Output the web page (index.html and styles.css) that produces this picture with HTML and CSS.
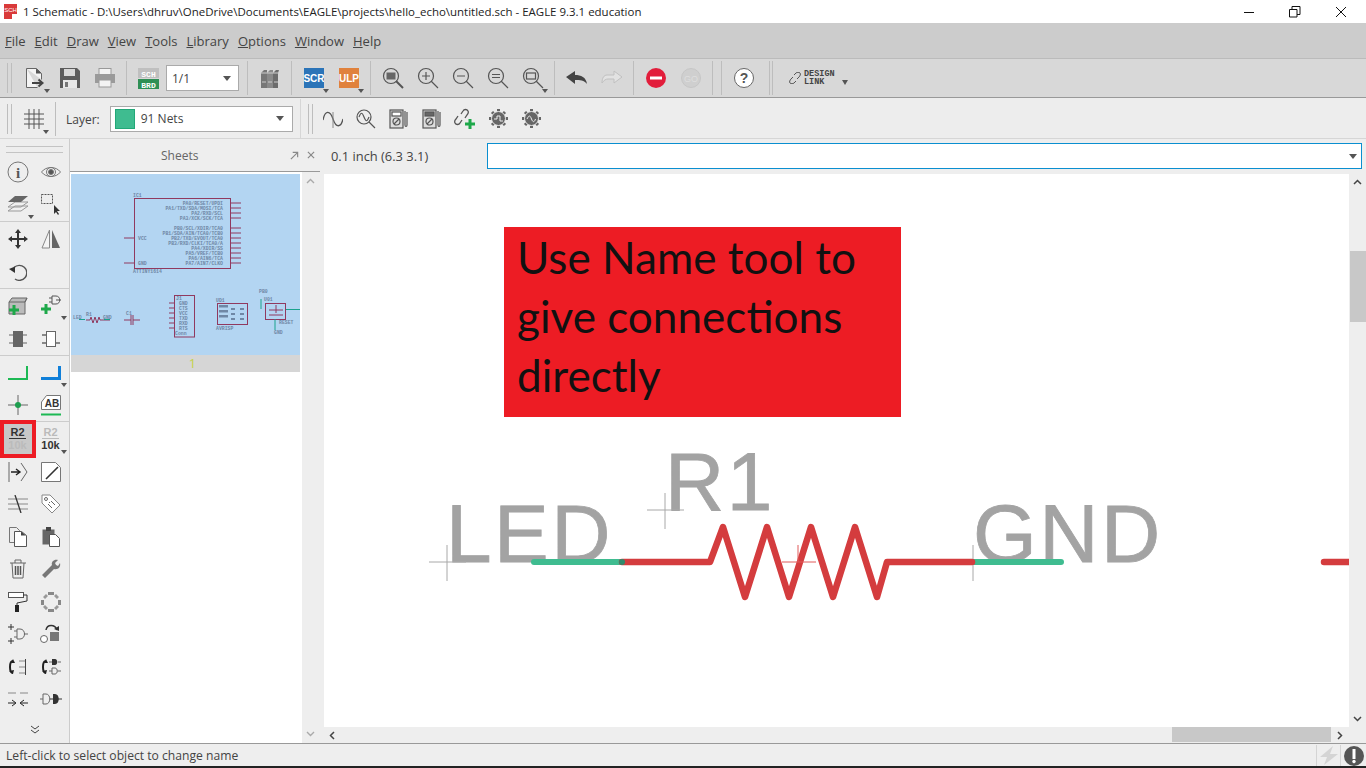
FILE: index.html
```html
<!DOCTYPE html>
<html lang="en">
<head>
  <meta charset="UTF-8">
  <title>1 Schematic - EAGLE 9.3.1 education</title>
  <link rel="stylesheet" href="styles.css">
</head>
<body>
<div class="app">

  <!-- title bar -->
  <div class="titlebar">
    <svg class="app-icon" width="16" height="16" viewBox="0 0 16 16"><rect x="1" y="0" width="13" height="15" fill="#d93a3a"/><rect x="9" y="10" width="6" height="6" fill="#fff"/><text x="7.5" y="8" class="t-sch">SCH</text></svg>
    <span class="title-text">1 Schematic - D:\Users\dhruv\OneDrive\Documents\EAGLE\projects\hello_echo\untitled.sch - EAGLE 9.3.1 education</span>
    <div class="winbtns">
      <div class="winbtn"><svg width="12" height="12" viewBox="0 0 12 12"><path d="M1 6.5h10" stroke="#111" fill="none"/></svg></div>
      <div class="winbtn"><svg width="12" height="12" viewBox="0 0 12 12"><path d="M.5 3.5h7.5v7.5h-7.5zM3 3V.5h8v8H8" stroke="#111" fill="none"/></svg></div>
      <div class="winbtn"><svg width="12" height="12" viewBox="0 0 12 12"><path d="M1 1l10 10M11 1L1 11" stroke="#111" fill="none"/></svg></div>
    </div>
  </div>

  <!-- menu -->
  <div class="menubar">
    <span><u>F</u>ile</span><span><u>E</u>dit</span><span><u>D</u>raw</span><span><u>V</u>iew</span><span><u>T</u>ools</span><span><u>L</u>ibrary</span><span><u>O</u>ptions</span><span><u>W</u>indow</span><span><u>H</u>elp</span>
  </div>

  <!-- main toolbar -->
  <div class="toolbar tb-main">
    <div class="grip"></div>
    <div class="tb drop"><svg width="24" height="24" viewBox="0 0 24 24"><path d="M3.5 2.5h10l5 5v6M3.5 2.5v19h11" fill="#f4f4f4" stroke="#666"/><path d="M13 2.5l5.500 5h-5.500z" fill="#555"/><path d="M9 17h10M15.500 13.500l4 3.500-4 3.500" fill="none" stroke="#444" stroke-width="2"/></svg></div>
    <div class="tb"><svg width="22" height="22" viewBox="0 0 22 22"><path d="M1 1h17l3 3v17H1z" fill="#5c5c5c"/><rect x="5" y="2" width="11" height="7" fill="#d8d8d8"/><rect x="4" y="13" width="14" height="8" fill="#e8e8e8"/><rect x="6" y="15" width="3" height="5" fill="#777"/></svg></div>
    <div class="tb"><svg width="22" height="22" viewBox="0 0 22 22"><rect x="5" y="1.500" width="12" height="6" fill="#f3f3f3" stroke="#999"/><rect x="1" y="7" width="20" height="9" fill="#9a9a9a"/><rect x="5" y="13" width="12" height="7" fill="#f3f3f3" stroke="#999"/></svg></div>
    <div class="sep"></div>
    <div class="tb"><svg width="21" height="21" viewBox="0 0 21 21"><rect width="21" height="10" fill="#bfbfbf"/><rect y="11" width="21" height="10" fill="#2f8f55"/><text x="10.500" y="8.500" class="t-mini">SCH</text><text x="10.500" y="19.500" class="t-mini">BRD</text></svg></div>
    <div class="combo sheet-combo"><span>1/1</span><i class="arrow"></i></div>
    <div class="sep"></div>
    <div class="tb"><svg width="20" height="22" viewBox="0 0 20 22"><path d="M1 6l3-3h3v18H1z" fill="#777"/><path d="M7 6l3-3h3v18H7z" fill="#8a8a8a"/><path d="M13 6l3-3h3l-1 3v15h-5z" fill="#6c6c6c"/><path d="M1 6h18M2 15h4M8 15h4M14 15h4" stroke="#ccc" fill="none"/></svg></div>
    <div class="sep"></div>
    <div class="tb drop"><svg width="20" height="20" viewBox="0 0 20 20"><rect width="20" height="20" fill="#2b74b8"/><text x="10" y="14" class="t-badge">SCR</text></svg></div>
    <div class="tb drop"><svg width="20" height="20" viewBox="0 0 20 20"><rect width="20" height="20" fill="#e0823d"/><text x="10" y="14" class="t-badge">ULP</text></svg></div>
    <div class="sep"></div>
    <div class="tb"><svg class="ln" width="22" height="22" viewBox="0 0 22 22"><circle cx="9" cy="9" r="7.500"/><rect x="4.500" y="5.500" width="9" height="7" fill="#666" stroke="none"/><path d="M14 14l7 7" stroke-width="2"/></svg></div>
    <div class="tb"><svg class="ln" width="22" height="22" viewBox="0 0 22 22"><circle cx="9" cy="9" r="7.500"/><path d="M5 9h8M9 5v8M14 14l7 7"/></svg></div>
    <div class="tb"><svg class="ln" width="22" height="22" viewBox="0 0 22 22"><circle cx="9" cy="9" r="7.500"/><path d="M5 9h8M14 14l7 7"/></svg></div>
    <div class="tb"><svg class="ln" width="22" height="22" viewBox="0 0 22 22"><circle cx="9" cy="9" r="7.500"/><path d="M5 7.500h8M5 10.500h8M14 14l7 7"/></svg></div>
    <div class="tb drop"><svg class="ln" width="22" height="22" viewBox="0 0 22 22"><circle cx="9" cy="9" r="7.500"/><rect x="4.500" y="6" width="9" height="6"/><path d="M14 14l7 7"/></svg></div>
    <div class="sep"></div>
    <div class="tb"><svg width="22" height="16" viewBox="0 0 22 16"><path d="M0 7l9-6v4c6 0 11 2 12 9-3-4-7-4-12-4v4z" fill="#444"/></svg></div>
    <div class="tb"><svg width="22" height="16" viewBox="0 0 22 16"><path d="M21 7l-8-6v4H6c-3 0-5 3-5 8 2-3 4-4 6-4h6v4z" fill="#e2e2e2" stroke="#c0c0c0"/></svg></div>
    <div class="sep"></div>
    <div class="tb"><svg width="20" height="20" viewBox="0 0 20 20"><circle cx="10" cy="10" r="10" fill="#e21d3b"/><rect x="4" y="8.500" width="12" height="3" fill="#fff"/></svg></div>
    <div class="tb"><svg width="20" height="20" viewBox="0 0 20 20"><circle cx="10" cy="10" r="9.500" fill="#cfcfcf" stroke="#c6c6c6"/><text x="10" y="13.500" class="t-go">GO</text></svg></div>
    <div class="sep sep-last"></div>
    <div class="sep sep-pair"></div>
    <div class="tb"><svg width="20" height="20" viewBox="0 0 20 20"><circle cx="10" cy="10" r="9.500" fill="#fff" stroke="#666"/><text x="10" y="15" class="t-help">?</text></svg></div>
    <div class="sep sep-link"></div>
    <div class="sep sep-tight"></div>
    <div class="design-link">
      <svg width="12" height="12" viewBox="0 0 12 12"><path d="M5 3l2-2c1-1 3-1 4 0s0 3-1 4L8 7M7 9l-2 2c-1 1-3 1-4 0s0-3 1-4l2-2" fill="none" stroke="#555"/></svg>
      <span>DESIGN<br>LINK</span>
      <i class="arrow"></i>
    </div>
  </div>

  <!-- layer toolbar -->
  <div class="toolbar tb-second">
    <div class="grip"></div>
    <div class="tb drop tb-grid"><svg width="20" height="20" viewBox="0 0 20 20"><path d="M5 0v20M10 0v20M15 0v20M0 5h20M0 10h20M0 15h20" stroke="#555" fill="none"/></svg></div>
    <div class="sep"></div>
    <span class="layer-label">Layer:</span>
    <div class="combo layer-combo"><b class="swatch"></b><span>91 Nets</span><i class="arrow"></i></div>
    <div class="sep sep-light"></div>
    <div class="grip grip-mid"></div>
    <div class="tb tb-33"><svg width="20" height="20" viewBox="0 0 20 20"><path d="M0 11C2 1 7 1 10 10s8 9 10 0" fill="none" stroke="#555" stroke-width="1.300"/><path d="M10 3v16" stroke="#888"/></svg></div>
    <div class="tb tb-33"><svg class="ln" width="20" height="20" viewBox="0 0 20 20"><circle cx="8" cy="8" r="7"/><path d="M3 8c2-5 3-5 5 0s3 5 5 0M13 13l6 6"/></svg></div>
    <div class="tb tb-33"><svg class="ln" width="20" height="20" viewBox="0 0 20 20"><rect x="1" y="1" width="13" height="18" fill="#ddd"/><rect x="3" y="3" width="9" height="4" fill="#fff"/><circle cx="7.500" cy="12.500" r="3.500"/><path d="M5 15l5-5M16 2v14c0 2 2 2 2 0V3"/></svg></div>
    <div class="tb tb-33"><svg class="ln" width="20" height="20" viewBox="0 0 20 20"><rect x="1" y="1" width="13" height="18" fill="#ddd"/><rect x="3" y="3" width="9" height="4" fill="#666"/><circle cx="7.500" cy="12.500" r="3.500"/><path d="M5 15l5-5M16 2v14c0 2 2 2 2 0V3"/></svg></div>
    <div class="tb tb-33"><svg width="22" height="22" viewBox="0 0 22 22"><path d="M7 6l2-3c1-2 4-2 5 0s0 3-1 4l-2 3M8 12l-2 3c-1 2-4 2-5 0s0-3 1-4l2-3" fill="none" stroke="#555" stroke-width="1.300"/><path d="M16 11v10M11 16h10" stroke="#1ea84a" stroke-width="3"/></svg></div>
    <div class="tb tb-33"><svg width="21" height="21" viewBox="0 0 21 21"><path d="M10.500 1v19M1 10.500h19M4 4l13 13M17 4L4 17" stroke="#666" stroke-width="3" fill="none"/><circle cx="10.500" cy="10.500" r="7" fill="#666" stroke="#eee"/><path d="M6 11h3V8h3v5h3" fill="none" stroke="#eee"/></svg></div>
    <div class="tb tb-33"><svg width="21" height="21" viewBox="0 0 21 21"><path d="M10.500 1v19M1 10.500h19M4 4l13 13M17 4L4 17" stroke="#666" stroke-width="3" fill="none"/><circle cx="10.500" cy="10.500" r="7" fill="#666" stroke="#eee"/><path d="M6 11c2-4 3-4 4.500 0s3 3 4 0" fill="none" stroke="#eee"/></svg></div>
  </div>

  <div class="main">

    <!-- left command column -->
    <div class="tools">
      <div class="tools-grip"></div>
      <div class="tool-group">
        <div class="tool"><svg class="ln ln-thin" width="22" height="22" viewBox="0 0 22 22"><circle cx="11" cy="11" r="10"/><text x="11" y="16.500" class="t-i">i</text></svg></div>
        <div class="tool"><svg class="ln ln-thin" width="20" height="14" viewBox="0 0 20 14"><path d="M.5 7C5 1 15 1 19.500 7 15 13 5 13 .5 7z"/><circle cx="10" cy="7" r="2.500" fill="#555"/><circle cx="10" cy="7" r="4.500"/></svg></div>
        <div class="tool drop"><svg width="22" height="22" viewBox="0 0 22 22"><path d="M1 17l7-5h13l-7 5zM1 13l7-5h13l-7 5z" fill="#f0f0f0" stroke="#999"/><path d="M1 8l7-6h13l-7 6z" fill="#666"/></svg></div>
        <div class="tool"><svg width="20" height="22" viewBox="0 0 20 22"><rect x=".5" y=".5" width="11" height="9" fill="none" stroke="#555" stroke-dasharray="2 1"/><path d="M13 11v9l2-2 2 3 1-1-2-3h3z" fill="#333"/></svg></div>
      </div>
      <div class="tool-group">
        <div class="tool"><svg width="20" height="20" viewBox="0 0 20 20"><path d="M10 0l3 4h-2v5h5V7l4 3-4 3v-2h-5v5h2l-3 4-3-4h2v-5H4v2l-4-3 4-3v2h5V4H7z" fill="#333"/></svg></div>
        <div class="tool"><svg width="20" height="20" viewBox="0 0 20 20"><path d="M8.500 1v18H1z" fill="#f4f4f4" stroke="#888"/><path d="M11 1v18h8z" fill="#666"/></svg></div>
        <div class="tool"><svg width="18" height="18" viewBox="0 0 18 18"><path d="M5 4.500A7.500 7.500 0 1 1 6 16" fill="none" stroke="#555" stroke-width="1.400"/><path d="M0 6l6-2.500V10z" fill="#333"/></svg></div>
        <div class="tool"></div>
      </div>
      <div class="tool-group">
        <div class="tool"><svg width="20" height="20" viewBox="0 0 20 20"><path d="M1 6l3-4h15l-2 4v12H1z" fill="#bbb" stroke="#666"/><path d="M1 6h16l2-4" fill="none" stroke="#666"/><path d="M6 9v10M1 14h10" stroke="#1ea84a" stroke-width="3"/></svg></div>
        <div class="tool drop"><svg width="22" height="22" viewBox="0 0 22 22"><path d="M12 1h4c5 0 5 8 0 8h-4zM12 3H9M12 7H9M16 5h5" fill="none" stroke="#555"/><path d="M6 9v10M1 14h10" stroke="#1ea84a" stroke-width="3"/></svg></div>
        <div class="tool"><svg width="18" height="16" viewBox="0 0 18 16"><rect x="4" y="0" width="10" height="16" fill="#666"/><path d="M0 4h4M0 12h4M14 4h4M14 12h4" stroke="#aaa" stroke-width="2"/></svg></div>
        <div class="tool"><svg width="18" height="16" viewBox="0 0 18 16"><rect x="4.500" y=".5" width="9" height="15" fill="#fff" stroke="#666"/><path d="M0 4h4M0 12h4M14 12h4" stroke="#888" stroke-width="2"/></svg></div>
      </div>
      <div class="tool-group tool-group-tight">
        <div class="tool"><svg width="20" height="14" viewBox="0 0 20 14"><path d="M0 13h19V0" fill="none" stroke="#1db954" stroke-width="2"/></svg></div>
        <div class="tool drop"><svg width="20" height="14" viewBox="0 0 20 14"><path d="M0 12.500h18.500V0" fill="none" stroke="#0f7fd9" stroke-width="3"/></svg></div>
        <div class="tool"><svg width="20" height="20" viewBox="0 0 20 20"><path d="M0 10h20M10 0v20" stroke="#666" fill="none"/><circle cx="10" cy="10" r="3" fill="#1e9e4f"/></svg></div>
        <div class="tool"><svg width="20" height="22" viewBox="0 0 20 22"><path d="M.5 8l5-6.500h14v14H.5z" fill="#fff" stroke="#777"/><text x="11" y="13" class="t-ab">AB</text><path d="M0 20.500h20" stroke="#1db954" stroke-width="2"/></svg></div>
      </div>
      <div class="tool-rows">
        <div class="tool"><div class="r2-on"><span class="r2">R2</span><span class="r2v faded">10k</span></div></div>
        <div class="tool drop"><div class="r2-off"><span class="r2 faded">R2</span><span class="r2v">10k</span></div></div>
        <div class="tool"><svg width="20" height="20" viewBox="0 0 20 20"><path d="M1 0v20M13 1l6 9-6 9" fill="none" stroke="#666"/><path d="M3 10h8M8 7l4 3-4 3" fill="none" stroke="#222" stroke-width="1.400"/></svg></div>
        <div class="tool"><svg width="20" height="20" viewBox="0 0 20 20"><path d="M.5.5h14l5 5v14H.5z" fill="#fff" stroke="#777"/><path d="M5 17L17 5" stroke="#333" stroke-width="1.600"/></svg></div>
        <div class="tool"><svg width="20" height="18" viewBox="0 0 20 18"><path d="M0 4h20M0 9h20M0 14h20" stroke="#aaa" stroke-width="1.500"/><path d="M7 0l6 18" stroke="#333" stroke-width="1.300"/></svg></div>
        <div class="tool"><svg width="20" height="20" viewBox="0 0 20 20"><path d="M1 1h8l10 10-8 8L1 9z" fill="#fff" stroke="#888"/><circle cx="5" cy="5" r="1.500" fill="none" stroke="#666"/><path d="M8 8l1 1M10 7l4 4M7 10l4 4" stroke="#666"/></svg></div>
        <div class="tool"><svg width="18" height="20" viewBox="0 0 18 20"><path d="M.5.500h7l3 3v12H.5z" fill="#eee" stroke="#777"/><path d="M5.500 4.500h7l5 4v11h-12z" fill="#fff" stroke="#555"/><path d="M12 4.500l5 4h-5z" fill="#444"/></svg></div>
        <div class="tool"><svg width="18" height="20" viewBox="0 0 18 20"><rect x=".5" y="2.500" width="12" height="15" fill="#666"/><rect x="4" y="0" width="5" height="4" fill="#444"/><path d="M7.500 7.500h6l4 4v8h-10z" fill="#fff" stroke="#555"/></svg></div>
        <div class="tool"><svg width="16" height="20" viewBox="0 0 16 20"><path d="M0 4h16M5 4V1h6v3M2 4l1 15h10l1-15" fill="none" stroke="#666"/><path d="M5.500 7v9M8 7v9M10.500 7v9" stroke="#555" stroke-width="1.500"/></svg></div>
        <div class="tool"><svg width="20" height="20" viewBox="0 0 20 20"><path d="M1 16L11 6c-1-3 2-6 6-5l-3 3 1 2 2 1 2-3c1 4-2 7-6 6L4 19z" fill="#777"/></svg></div>
        <div class="tool"><svg width="20" height="20" viewBox="0 0 20 20"><rect x=".5" y=".5" width="15" height="5" fill="#fff" stroke="#555"/><path d="M15 3h4v6l-10 2v3" fill="none" stroke="#333"/><rect x="7" y="13" width="4" height="7" fill="#222"/></svg></div>
        <div class="tool"><svg width="20" height="20" viewBox="0 0 20 20"><rect x="7" y="0" width="6" height="3" fill="#888"/><rect x="7" y="17" width="6" height="3" fill="#888"/><rect x="0" y="8" width="3" height="5" fill="#888"/><rect x="17" y="8" width="3" height="5" fill="#888"/><path d="M2 5l3-3 2 2-3 3zM18 5l-3-3-2 2 3 3zM2 15l3 3 2-2-3-3zM18 15l-3 3-2-2 3-3z" fill="#999"/></svg></div>
        <div class="tool"><svg width="20" height="20" viewBox="0 0 20 20"><path d="M0 3h6M3 0v6M0 17h6M3 14v6" stroke="#333" fill="none"/><path d="M9 5h3c6 0 6 10 0 10H9zM9 7H6M9 13H6M16 10h4" fill="none" stroke="#666"/></svg></div>
        <div class="tool"><svg width="22" height="20" viewBox="0 0 22 20"><path d="M6 6c1-6 9-6 11 0" fill="none" stroke="#333" stroke-width="1.500"/><path d="M14 5l5 2 0-5z" fill="#333"/><circle cx="4" cy="15" r="3.500" fill="#fff" stroke="#666"/><rect x="10" y="8" width="9" height="9" fill="#777"/></svg></div>
        <div class="tool"><svg width="20" height="18" viewBox="0 0 20 18"><path d="M5 3C1 3 1 15 5 15" fill="none" stroke="#222" stroke-width="2"/><path d="M1 13l4 3 1-4zM5 1l-2 4 4 0z" fill="#222"/><path d="M11 3h6M11 9h6M11 15h6" stroke="#888"/><path d="M17.500 1v16" stroke="#444"/></svg></div>
        <div class="tool"><svg width="20" height="18" viewBox="0 0 20 18"><path d="M5 3C1 3 1 15 5 15" fill="none" stroke="#222" stroke-width="2"/><path d="M1 13l4 3 1-4zM5 1l-2 4 4 0z" fill="#222"/><path d="M11 1h3c3 0 3 6 0 6h-3z" fill="#333"/><path d="M11 10h3c3 0 3 6 0 6h-3z" fill="none" stroke="#666"/><path d="M8 4h3M17 4h3M8 13h3M17 13h3" stroke="#666"/></svg></div>
        <div class="tool"><svg width="20" height="16" viewBox="0 0 20 16"><path d="M0 2h8M12 2h8" stroke="#aaa" stroke-width="1.500"/><path d="M0 12h7M4 9l4 3-4 3M20 12h-7M16 9l-4 3 4 3" stroke="#222" fill="none"/></svg></div>
        <div class="tool"><svg width="22" height="12" viewBox="0 0 22 12"><path d="M3 1h3c5 0 5 10 0 10H3zM0 6h3" fill="none" stroke="#666"/><path d="M13 1h2c5 0 5 10 0 10h-2z" fill="#333"/><path d="M10 6h3M18 6h4" stroke="#333"/></svg></div>
      </div>
      <div class="tools-more"><svg width="10" height="9" viewBox="0 0 10 9"><path d="M1 1l4 3 4-3M1 5l4 3 4-3" fill="none" stroke="#444"/></svg></div>
    </div>

    <!-- sheets panel -->
    <div class="sheets">
      <div class="sheets-head">
        <span>Sheets</span>
        <svg class="head-ic" width="9" height="9" viewBox="0 0 10 10"><path d="M1 9l7-7M3 1.500h5.500V7" fill="none" stroke="#888" stroke-width="1.300"/></svg>
        <svg class="head-ic" width="8" height="8" viewBox="0 0 9 9"><path d="M1 1l7 7M8 1L1 8" stroke="#888" stroke-width="1.300"/></svg>
      </div>
      <div class="sheets-body">
        <div class="sheet-list">
          <div class="sheet-thumb">
            <svg width="229" height="181" viewBox="72 175 229 181">
              <g class="th-lines">
                <rect x="135.500" y="199.500" width="96" height="70"/>
                <path d="M232 204h10M232 209h10M232 214h10M232 219h10M232 229h10M232 234h10M232 239h10M232 244h10M232 249h10M232 254h10M232 259h10M232 264h10M125 239h10M125 264h10"/>
                <path d="M111 321h-10l-1-3-2 6-2-6-2 6-2-6-1 3h-4M125 321h7M134 321h7M132 316v10M134 316v10"/>
                <rect x="175.500" y="296.500" width="20" height="41.500"/>
                <path d="M170 304h5M170 309h5M170 314h5M170 319h5M170 324h5M170 329h5"/>
                <rect x="218.500" y="304.500" width="30" height="21"/>
                <rect x="266.500" y="304.500" width="20" height="16"/>
                <path d="M270 311h14M270 316h14M277 306v8"/>
              </g>
              <path class="th-nets" d="M80 320.500h6M105 320.500h6M262 300v10M287 310.500h14M276 320v11"/>
              <g class="th-blocks"><rect x="220" y="306" width="9" height="2.500"/><rect x="220" y="311" width="9" height="2.500"/><rect x="220" y="316" width="9" height="2.500"/><rect x="232" y="309" width="4" height="2"/><rect x="241" y="309" width="4" height="2"/><rect x="232" y="314" width="4" height="2"/><rect x="241" y="314" width="4" height="2"/><rect x="232" y="319" width="4" height="2"/><rect x="241" y="319" width="4" height="2"/></g>
              <g class="th-text">
                <text x="224" y="206" class="end">PA0/RESET/UPDI</text>
                <text x="224" y="211" class="end">PA1/TXD/SDA/MOSI/TCA</text>
                <text x="224" y="216" class="end">PA2/RXD/SCL</text>
                <text x="224" y="221" class="end">PA3/XCK/SCK/TCA</text>
                <text x="224" y="231" class="end">PB0/SCL/XDIR/TCA0</text>
                <text x="224" y="236" class="end">PB1/SDA/AIN/TCA0/TCB0</text>
                <text x="224" y="241" class="end">PB2/TXD/EVOUT/TCA0</text>
                <text x="224" y="246" class="end">PB3/RXD/CLKI/TCA0/A</text>
                <text x="224" y="251" class="end">PA4/XDIR/SS</text>
                <text x="224" y="256" class="end">PA5/VREF/TCB0</text>
                <text x="224" y="261" class="end">PA6/AIN6/TCA</text>
                <text x="224" y="266" class="end">PA7/AIN7/CLKO</text>
                <text x="139" y="241">VCC</text><text x="139" y="266">GND</text>
                <text x="134" y="198">IC1</text><text x="134" y="274">ATTINY1614</text>
                <text x="74" y="320">LED</text><text x="104" y="320">GND</text><text x="87" y="317">R1</text><text x="127" y="316">C1</text>
                <text x="177" y="301">J1</text><text x="180" y="306">GND</text><text x="180" y="311">CTS</text><text x="180" y="316">VCC</text><text x="180" y="321">TXD</text><text x="180" y="326">RXD</text><text x="180" y="331">RTS</text><text x="176" y="336">Conn</text>
                <text x="217" y="303">UD1</text><text x="217" y="331">AVRISP</text>
                <text x="260" y="294">PB0</text><text x="265" y="302">U01</text><text x="280" y="325">RESET</text><text x="275" y="335">GND</text>
              </g>
            </svg>
          </div>
          <div class="sheet-num">1</div>
        </div>
        <div class="vscroll vscroll-sheets">
          <svg width="9" height="6" viewBox="0 0 9 6"><path d="M1 5l3.500-3.500L8 5" fill="none" stroke="#aaa" stroke-width="1.400"/></svg>
          <svg width="9" height="6" viewBox="0 0 9 6"><path d="M1 1l3.500 3.500L8 1" fill="none" stroke="#aaa" stroke-width="1.400"/></svg>
        </div>
      </div>
    </div>

    <!-- command line + drawing -->
    <div class="work">
      <div class="cmdbar">
        <span class="coords">0.1 inch (6.3 3.1)</span>
        <div class="cmd-input"><i class="arrow"></i></div>
      </div>
      <div class="canvas-row">
        <div class="canvas">
          <svg class="sch" width="1025" height="553" viewBox="324 174 1025 553">
            <g class="vec-text">
              <text x="446" y="562">LED</text>
              <text x="665" y="510">R1</text>
              <text x="973" y="562">GND</text>
            </g>
            <path class="cross" d="M429 562h37M447 545v36M647 510h37M665 493v36M973 545v36"/>
            <path class="wire-net" d="M534 562h88M973 562h88"/>
            <path class="wire-part" d="M622 562h88l13-35 22 70 22-70 22 70 22-70 22 70 22-70 22 70 10-35h85M1324 562h25"/>
            <path class="cross-red" d="M782 562h34M798 545v17"/>
            <circle class="joint" cx="622" cy="562" r="3"/>
          </svg>
          <div class="note">Use Name tool to give connections directly</div>
        </div>
        <div class="vscroll vscroll-main">
          <svg width="9" height="6" viewBox="0 0 9 6"><path d="M1 5l3.500-3.500L8 5" fill="none" stroke="#444" stroke-width="1.500"/></svg>
          <div class="vthumb"></div>
          <svg width="9" height="6" viewBox="0 0 9 6"><path d="M1 1l3.500 3.500L8 1" fill="none" stroke="#444" stroke-width="1.500"/></svg>
        </div>
      </div>
      <div class="hscroll">
        <svg width="6" height="9" viewBox="0 0 6 9"><path d="M5 1L1.500 4.500 5 8" fill="none" stroke="#444" stroke-width="1.500"/></svg>
        <div class="hthumb"></div>
        <svg width="6" height="9" viewBox="0 0 6 9"><path d="M1 1l3.500 3.500L1 8" fill="none" stroke="#444" stroke-width="1.500"/></svg>
      </div>
    </div>
  </div>

  <!-- status -->
  <div class="status">
    <span>Left-click to select object to change name</span>
    <div class="status-right">
      <div class="status-cell"><svg width="20" height="20" viewBox="0 0 20 20"><path d="M14 0L1 11h7l-3 8 14-11h-8z" fill="#d4d4d4"/></svg></div>
      <div class="status-alert"><svg width="20" height="20" viewBox="0 0 20 20"><circle cx="10" cy="10" r="10" fill="#555"/><rect x="8.500" y="3" width="3" height="10" fill="#fff"/><circle cx="10" cy="15.500" r="1.700" fill="#fff"/></svg></div>
    </div>
  </div>
</div>
</body>
</html>
```
FILE: styles.css
```css
* {
  box-sizing: border-box;
}

body {
  margin: 0;
  font-family: "Open Sans", "Noto Sans", sans-serif;
  color: #444;
  background: #eee;
}

.app {
  width: 1366px;
  height: 768px;
  display: flex;
  flex-direction: column;
  overflow: hidden;
}

/* title bar */
.titlebar {
  height: 23px;
  display: flex;
  align-items: center;
  background: #fff;
  padding-left: 3px;
  flex: none;
}

.app-icon {
  margin-right: 4px;
}

.t-sch {
  font: 6px "Liberation Sans", sans-serif;
  fill: #fff;
  text-anchor: middle;
}

.title-text {
  font-size: 11.480px;
  color: #222;
  white-space: nowrap;
}

.winbtns {
  margin-left: auto;
  margin-right: 2px;
  display: flex;
}

.winbtn {
  width: 46px;
  height: 23px;
  display: flex;
  align-items: center;
  justify-content: center;
}

/* menu */
.menubar {
  height: 36px;
  flex: none;
  display: flex;
  align-items: center;
  gap: 9px;
  padding: 0 0 0 5px;
  background: #ccc;
  border-bottom: 1px solid #bbb;
  font-size: 13px;
  color: #444;
}

/* toolbars */
.toolbar {
  flex: none;
  display: flex;
  align-items: center;
}

.tb-main {
  height: 39px;
  background: #d8d8d8;
  border-bottom: 1px solid #999;
}

.tb-second {
  height: 41px;
  padding-top: 1px;
  background: #ededed;
  border-bottom: 1px solid #d6d6d6;
}

.grip {
  width: 5px;
  height: 30px;
  margin-left: 7px;
  border-left: 1px solid #bdbdbd;
  border-right: 1px solid #bdbdbd;
  flex: none;
}

.tb-main .grip {
  margin-right: 5px;
}

.tb {
  position: relative;
  width: 35px;
  height: 30px;
  flex: none;
  display: flex;
  align-items: center;
  justify-content: center;
}

.tb-33 {
  width: 33px;
}

.tb-grid {
  margin-left: 4px;
}

.sep {
  width: 1px;
  height: 34px;
  margin: 0 4px;
  background: #bdbdbd;
  flex: none;
}

.sep-last {
  margin-right: 8px;
}

.sep-pair {
  margin-left: 0;
}

.sep-link {
  margin: 0 2px 0 8px;
}

.sep-tight {
  margin: 0 16px 0 0;
}

.sep-light {
  margin: 0 0 0 7px;
  height: 40px;
  background: #d6d6d6;
}

.grip-mid {
  margin-right: 4px;
}

.drop::after,
.arrow {
  content: "";
  display: block;
  width: 0;
  height: 0;
  border-left: 4px solid transparent;
  border-right: 4px solid transparent;
  border-top: 5px solid #555;
}

.drop::after {
  position: absolute;
  right: 2px;
  bottom: 0;
  border-left-width: 3px;
  border-right-width: 3px;
  border-top-width: 4px;
}

.combo {
  height: 26px;
  background: #fff;
  border: 1px solid #aaa;
  display: flex;
  align-items: center;
  font-size: 12px;
  color: #444;
  flex: none;
}

.combo .arrow {
  margin-left: auto;
}

.sheet-combo {
  width: 73px;
  padding: 0 7px 0 5px;
  margin-right: 4px;
}

.layer-combo {
  width: 183px;
  padding: 0 8px 0 4px;
}

.swatch {
  width: 20px;
  height: 20px;
  margin-right: 6px;
  background: #3fbc90;
  border: 1px solid #22a878;
}

.layer-label {
  font-size: 12px;
  margin: 1px 10px 0 6px;
}

.t-mini {
  font: bold 8px "Liberation Mono", monospace;
  fill: #fff;
  text-anchor: middle;
}

.t-badge {
  font: bold 10px "Liberation Sans Narrow", "Liberation Sans", sans-serif;
  fill: #fff;
  text-anchor: middle;
}

.t-go {
  font: 9px "Liberation Sans", sans-serif;
  fill: #dedede;
  text-anchor: middle;
}

.t-help {
  font: bold 14px "Liberation Sans", sans-serif;
  fill: #555;
  text-anchor: middle;
}

.t-i {
  font: bold 15px "Liberation Serif", serif;
  fill: #555;
  stroke: none;
  text-anchor: middle;
}

.t-ab {
  font: bold 10px "Liberation Sans", sans-serif;
  fill: #333;
  text-anchor: middle;
}

.ln {
  fill: none;
  stroke: #555;
  stroke-width: 1.200;
}

.ln-thin {
  stroke: #777;
  stroke-width: 1;
}

.design-link {
  position: relative;
  display: flex;
  align-items: center;
  gap: 3px;
  font: bold 8.500px/8px "Liberation Mono", monospace;
  color: #444;
}

.design-link .arrow {
  margin: 9px 0 0 4px;
  border-left-width: 3px;
  border-right-width: 3px;
}

/* main area */
.main {
  flex: 1;
  display: flex;
  min-height: 0;
}

.tools {
  width: 70px;
  flex: none;
  background: #eee;
  border-right: 1px solid #ccc;
  display: flex;
  flex-direction: column;
}

.tools-grip {
  height: 16px;
  margin: 0 6px;
}

.tools-grip::before {
  content: "";
  display: block;
  height: 5px;
  margin-top: 7px;
  border-top: 1px solid #c4c4c4;
  border-bottom: 1px solid #c4c4c4;
}

.tool-group,
.tool-rows {
  display: grid;
  grid-template-columns: 33px 33px;
  padding-left: 1px;
  grid-auto-rows: 33px;
}

.tool-group {
  border-bottom: 1px solid #ccc;
}

.tool-group-tight {
  grid-auto-rows: 32px;
  padding-top: 1px;
}

.tool-rows {
  grid-auto-rows: 32.500px;
  padding-top: 1px;
}

.tool {
  position: relative;
  display: flex;
  align-items: center;
  justify-content: center;
}

.tool.drop::after {
  right: 0;
  bottom: 2px;
}

.r2-on,
.r2-off {
  width: 28px;
  height: 30px;
  display: flex;
  flex-direction: column;
  align-items: center;
  justify-content: center;
  font: bold 11px/12px "Liberation Sans", sans-serif;
  color: #333;
}

.r2-on {
  background: #c8c8c8;
  outline: 4px solid #ed1c24;
}

.r2 {
  border-bottom: 1px solid currentColor;
  padding: 0 1px;
  line-height: 11px;
}

.r2v {
  font-size: 11px;
}

.faded {
  color: #bbb;
}

.tools-more {
  flex: 1;
  display: flex;
  align-items: center;
  justify-content: center;
}

/* sheets */
.sheets {
  width: 250px;
  flex: none;
  display: flex;
  flex-direction: column;
  background: #eee;
}

.sheets-head {
  height: 33px;
  flex: none;
  display: flex;
  align-items: center;
  justify-content: flex-end;
  gap: 8px;
  padding-right: 5px;
  position: relative;
  font-size: 12px;
  color: #666;
  border-bottom: 1px solid #999;
}

.sheets-head span {
  position: absolute;
  left: 91px;
}

.sheets-body {
  flex: 1;
  display: flex;
  min-height: 0;
}

.sheet-list {
  width: 232px;
  background: #fff;
  padding: 2px 0 0 1px;
  flex: none;
}

.sheet-thumb {
  width: 229px;
  height: 181px;
  background: #b3d5f2;
}

.sheet-thumb svg {
  display: block;
}

.sheet-num {
  width: 229px;
  height: 17px;
  padding-left: 14px;
  background: #d6d6d6;
  color: #c3d24a;
  font-size: 13px;
  line-height: 17px;
  text-align: center;
}

.th-lines {
  fill: none;
  stroke: #90395f;
  stroke-width: 1;
}

.th-nets {
  fill: none;
  stroke: #1aa28d;
  stroke-width: 1;
}

.th-blocks {
  fill: #6f87a5;
}

.th-text text {
  font: bold 4.800px "Liberation Mono", monospace;
  fill: #6f87a5;
}

.th-text .end {
  text-anchor: end;
}

.vscroll {
  display: flex;
  flex-direction: column;
  align-items: center;
  justify-content: space-between;
  background: #eee;
}

.vscroll-sheets {
  width: 17px;
  padding: 6px 0;
}

/* work area */
.work {
  flex: 1;
  display: flex;
  flex-direction: column;
  min-width: 0;
}

.cmdbar {
  height: 35px;
  flex: none;
  display: flex;
  align-items: center;
  padding: 0 4px 1px 11px;
  background: #eee;
  font-size: 12.900px;
  color: #444;
}

.coords {
  width: 156px;
  flex: none;
}

.cmd-input {
  flex: 1;
  height: 26px;
  background: #fff;
  border: 1px solid #0a8fd0;
  display: flex;
  align-items: center;
  justify-content: flex-end;
  padding-right: 4px;
}

.canvas-row {
  flex: 1;
  display: flex;
  padding-left: 4px;
  min-height: 0;
}

.canvas {
  position: relative;
  flex: 1;
  background: #fff;
  overflow: hidden;
}

.sch {
  display: block;
}

.vec-text text {
  font: 82px "Liberation Sans", sans-serif;
  letter-spacing: 2.500px;
  fill: #a3a3a3;
  stroke: #a3a3a3;
  stroke-width: .8;
}

.cross {
  fill: none;
  stroke: #a8a8a8;
  stroke-width: 1;
}

.cross-red {
  fill: none;
  stroke: #e05a5a;
  stroke-width: 1;
}

.wire-net {
  fill: none;
  stroke: #3fbc90;
  stroke-width: 6;
  stroke-linecap: round;
}

.wire-part {
  fill: none;
  stroke: #d43c3e;
  stroke-width: 6.500;
  stroke-linecap: round;
  stroke-linejoin: round;
}

.joint {
  fill: #2f8a6c;
}

.note {
  position: absolute;
  left: 180px;
  top: 53px;
  width: 397px;
  height: 190px;
  padding: 0 12px 0 13px;
  background: #ed1c24;
  color: #111;
  font: 44.100px/59px Lato, "Open Sans", sans-serif;
}

.vscroll-main {
  width: 17px;
  flex: none;
  padding: 5px 0;
  position: relative;
}

.vthumb {
  position: absolute;
  left: 1px;
  right: 0;
  top: 77px;
  height: 71px;
  background: #c8c8c8;
}

.hscroll {
  height: 16px;
  flex: none;
  margin-left: 4px;
  display: flex;
  align-items: center;
  justify-content: space-between;
  padding: 0 23px 0 5px;
  position: relative;
  background: #eee;
}

.hthumb {
  position: absolute;
  left: 848px;
  width: 159px;
  top: 0;
  height: 15px;
  background: #c8c8c8;
}

/* status */
.status {
  height: 25px;
  flex: none;
  display: flex;
  align-items: center;
  padding: 1px 0 0 6px;
  background: #eee;
  border-top: 1px solid #999;
  border-bottom: 2px solid #222;
  font-size: 12.150px;
  color: #444;
}

.status-right {
  margin-left: auto;
  display: flex;
  height: 100%;
  align-items: center;
}

.status-cell {
  width: 25px;
  height: 100%;
  display: flex;
  align-items: center;
  justify-content: center;
  border-left: 1px solid #d4d4d4;
  border-right: 1px solid #d4d4d4;
}

.status-alert {
  width: 25px;
  display: flex;
  justify-content: center;
}
```
